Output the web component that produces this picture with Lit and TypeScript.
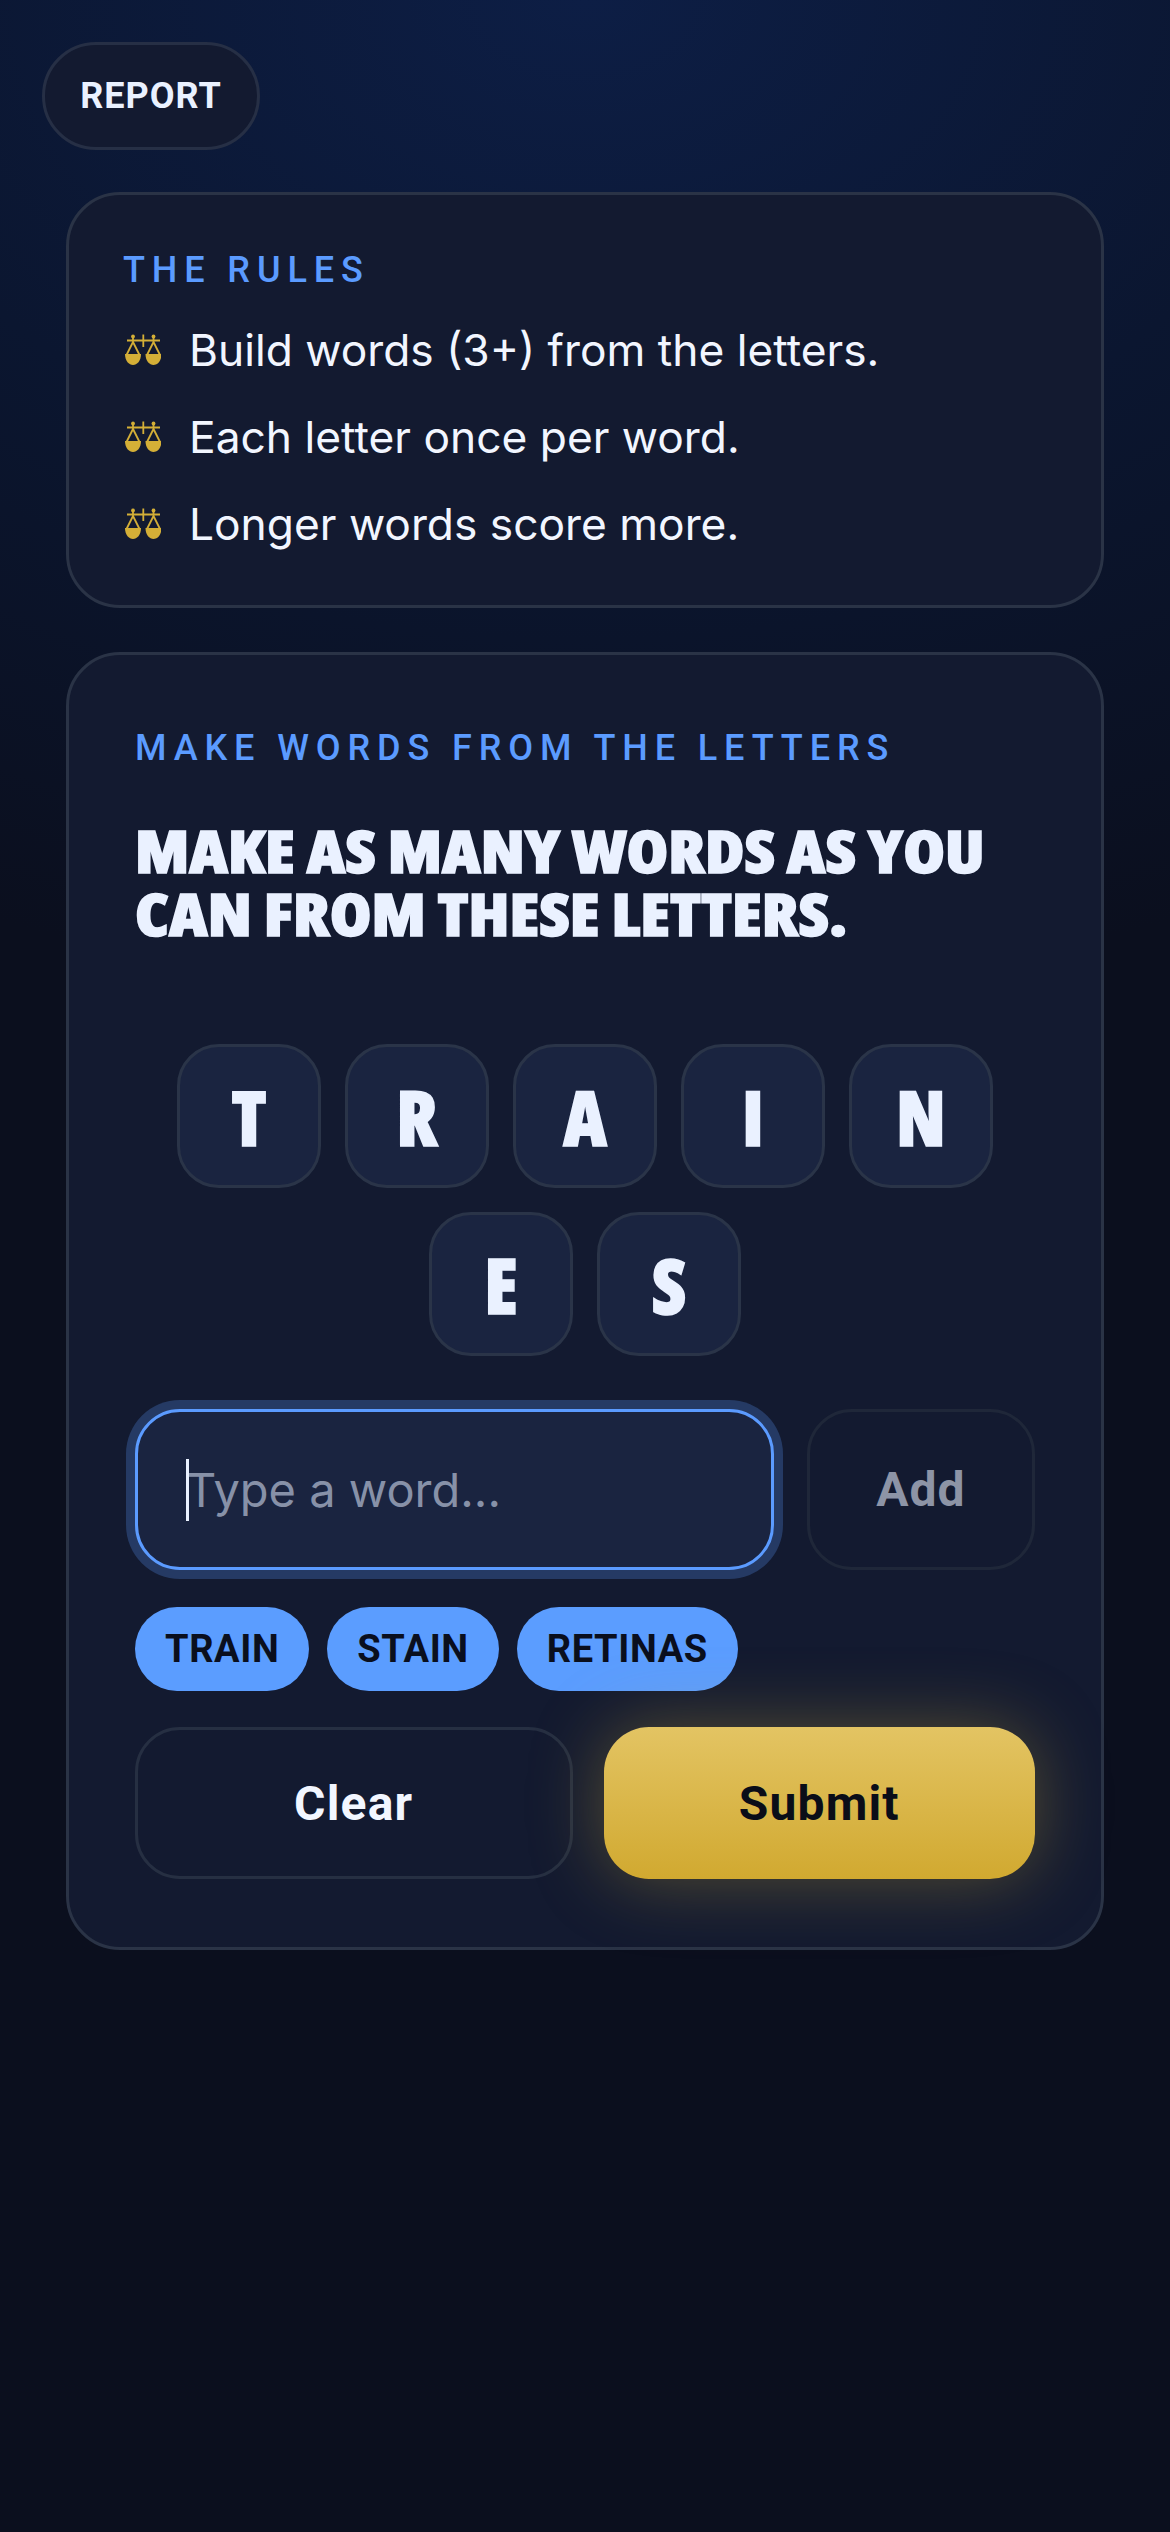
import { LitElement, html, css, svg } from "lit";
import { customElement } from "lit/decorators.js";

const RULES = ["Build words (3+) from the letters.", "Each letter once per word.", "Longer words score more."];
const ROWS = [["T", "R", "A", "I", "N"], ["E", "S"]];
const CHIPS = ["TRAIN", "STAIN", "RETINAS"];

const pan = (x: number) => svg`
  <path d="M${x} 33L${x - 6.5} 46M${x} 33L${x + 6.5} 46M${x} 27V34" fill="none" stroke="#d4af37" stroke-width="1.8"/>
  <circle cx=${x} cy="27.5" r="1.9" fill="#d4af37"/>
  <path d="M${x - 8} 45H${x + 8}C${x + 8} 52 ${x + 4} 56 ${x} 56C${x - 4} 56 ${x - 8} 52 ${x - 8} 45Z" fill="#d4af37"/>`;

const scales = html`<svg class="mark" viewBox="15 24 36 33" width="36" height="33" aria-hidden="true">
  ${pan(23)}${pan(43.5)}
  <path d="M17 31.5H50M33.3 25.5V38" fill="none" stroke="#d4af37" stroke-width="1.8"/>
</svg>`;

@customElement("app-root")
export class AppRoot extends LitElement {
  static styles = css`
    :host {
      display: block;
      width: 1170px;
      height: 2532px;
      overflow: hidden;
      box-sizing: border-box;
      padding: 42px 66px 0;
      background: radial-gradient(ellipse 1500px 1000px at 50% 0%, #0d1e45 0%, #0b1630 50%, #0b0f1e 100%), #0b0f1e;
      font-family: Inter, "Noto Sans", sans-serif;
      color: #eaf1ff;
    }
    * { box-sizing: border-box; }
    .report {
      display: flex; align-items: center; justify-content: center;
      width: 218px; height: 108px; margin-left: -24px; margin-bottom: 42px;
      border-radius: 54px; border: 3px solid #262f45; background: #131a30;
      font: 700 36px Roboto, sans-serif; letter-spacing: 1px; color: #eaf1ff;
    }
    .card { border: 3px solid #2a3346; border-radius: 54px; background: #131a30; }
    .rules { height: 416px; padding: 54px 54px 0; margin-bottom: 44px; }
    .label { font: 500 36px/1 Roboto, sans-serif; color: #5b9bff; letter-spacing: 6.9px; }
    .rules .label { margin-top: 3px; margin-bottom: 18px; }
    .rule { display: flex; align-items: center; height: 87px; font: 400 44.3px Inter, sans-serif; color: #f2f6ff; }
    .mark { flex: none; margin: 0 28px 0 2px; }
    .game { height: 1298px; padding: 75px 66px 0; }
    h1 {
      width: 774px; margin: 53px 0 0; font: 800 58px/63px "Open Sans", sans-serif; font-stretch: 75%;
      color: #eaf1ff; -webkit-text-stroke: 1.5px #eaf1ff;
      transform: scaleX(1.16); transform-origin: left top;
    }
    .tiles { display: flex; flex-direction: column; gap: 24px; margin-top: 99px; align-items: center; }
    .tile-row { display: flex; gap: 24px; }
    .tile {
      width: 144px; height: 144px; border-radius: 42px; border: 3px solid #2a3448; background: #1a2440;
      display: flex; align-items: center; justify-content: center;
      font: 800 76px "Open Sans", sans-serif; font-stretch: 75%; color: #eaf1ff; -webkit-text-stroke: 1.5px #eaf1ff;
    }
    .entry { display: flex; gap: 33px; margin-top: 53px; }
    .field { position: relative; flex: 1; height: 161px; }
    input {
      width: 100%; height: 100%; padding: 0 48px; border: 3px solid #5b9bff; border-radius: 45px;
      background: #1a2440; box-shadow: 0 0 0 9px rgba(91,155,255,.25); outline: none;
      font: 400 47px Inter, sans-serif; color: #eaf1ff;
    }
    input::placeholder { color: #8791a8; opacity: 1; }
    .caret { position: absolute; left: 51px; top: 50px; width: 3px; height: 62px; background: #eaf1ff; }
    .add {
      width: 228px; height: 161px; border-radius: 45px; border: 3px solid #1f2739; background: #131a30;
      display: flex; align-items: center; justify-content: center;
      font: 700 48px Roboto, sans-serif; letter-spacing: 1px; color: #8d94a6;
    }
    .chips { display: flex; gap: 18px; margin-top: 37px; }
    .chip {
      height: 84px; padding: 0 30px; border-radius: 42px; background: #5b9dff; color: #0a0f1e;
      display: flex; align-items: center; font: 700 38px Roboto, sans-serif; letter-spacing: 0.6px;
    }
    .actions { display: flex; gap: 31px; margin-top: 36px; }
    .btn {
      flex: 1; height: 152px; border-radius: 45px; display: flex; align-items: center; justify-content: center;
      font: 700 48px Roboto, sans-serif; letter-spacing: 1.2px;
    }
    .clear { border: 3px solid #262f42; background: #131a30; color: #f2f6ff; }
    .submit {
      background: linear-gradient(180deg, #e3c463, #d1a930); color: #0a0d18;
      box-shadow: 0 0 72px rgba(212,175,55,.35);
    }
  `;

  render() {
    return html`
      <div class="report">REPORT</div>
      <section class="card rules">
        <div class="label">THE RULES</div>
        ${RULES.map((r) => html`<div class="rule">${scales}${r}</div>`)}
      </section>
      <section class="card game">
        <div class="label">MAKE WORDS FROM THE LETTERS</div>
        <h1>MAKE AS MANY WORDS AS YOU CAN FROM THESE LETTERS.</h1>
        <div class="tiles">
          ${ROWS.map((row) => html`<div class="tile-row">${row.map((l) => html`<div class="tile">${l}</div>`)}</div>`)}
        </div>
        <div class="entry">
          <div class="field"><input placeholder="Type a word..." /><span class="caret"></span></div>
          <div class="add">Add</div>
        </div>
        <div class="chips">${CHIPS.map((c) => html`<div class="chip">${c}</div>`)}</div>
        <div class="actions">
          <div class="btn clear">Clear</div>
          <div class="btn submit">Submit</div>
        </div>
      </section>
    `;
  }
}
